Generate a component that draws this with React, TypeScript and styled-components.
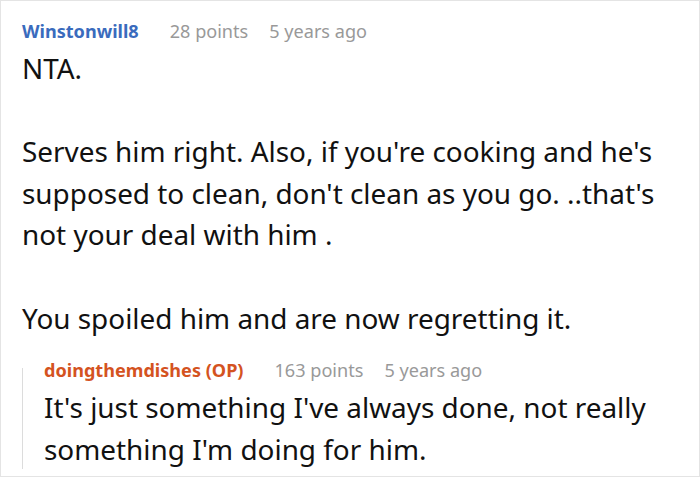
import React from 'react';
import styled, { createGlobalStyle } from 'styled-components';

const GlobalStyle = createGlobalStyle`
  html, body {
    margin: 0;
    padding: 0;
    background: #fff;
  }
  body {
    font-family: 'Noto Sans', 'Open Sans', sans-serif;
    color: #111;
  }
`;

const Frame = styled.div`
  box-sizing: border-box;
  width: 700px;
  height: 477px;
  border: 1px solid #e4e4e4;
  padding: 13px 0 0 21px;
  overflow: hidden;
`;

const Meta = styled.div`
  display: flex;
  align-items: baseline;
  height: 34px;
  line-height: 34px;
  font-size: 18.1px;
  white-space: nowrap;
`;

const Author = styled.span<{ op?: boolean }>`
  font-weight: 700;
  color: ${(p) => (p.op ? '#d4531f' : '#3a6bbd')};
  margin-right: 31px;
`;

const Info = styled.span`
  color: #999;
  margin-right: 21px;
`;

const Body = styled.div`
  font-size: 27.9px;
  line-height: 41.6px;
  color: #111;

  p {
    margin: 0 0 41.6px 0;
  }
  p:last-child {
    margin-bottom: 0;
  }
`;

const Reply = styled.div`
  position: relative;
  margin-top: 14px;
  padding-left: 22px;

  &::before {
    content: '';
    position: absolute;
    left: 0;
    top: 15px;
    bottom: 1px;
    width: 1px;
    background: #dcdcdc;
  }
`;

type CommentProps = {
  author: string;
  op?: boolean;
  points: number;
  age: string;
  paragraphs: string[];
};

const Comment = ({ author, op, points, age, paragraphs }: CommentProps) => (
  <div>
    <Meta>
      <Author op={op}>{author}</Author>
      <Info>{points} points</Info>
      <Info>{age}</Info>
    </Meta>
    <Body>
      {paragraphs.map((text, i) => (
        <p key={i}>{text}</p>
      ))}
    </Body>
  </div>
);

export default function App() {
  return (
    <>
      <GlobalStyle />
      <Frame>
        <Comment
          author="Winstonwill8"
          points={28}
          age="5 years ago"
          paragraphs={[
            'NTA.',
            "Serves him right. Also, if you're cooking and he's supposed to clean, don't clean as you go. ..that's not your deal with him .",
            'You spoiled him and are now regretting it.',
          ]}
        />
        <Reply>
          <Comment
            author="doingthemdishes (OP)"
            op
            points={163}
            age="5 years ago"
            paragraphs={[
              "It's just something I've always done, not really something I'm doing for him.",
            ]}
          />
        </Reply>
      </Frame>
    </>
  );
}
